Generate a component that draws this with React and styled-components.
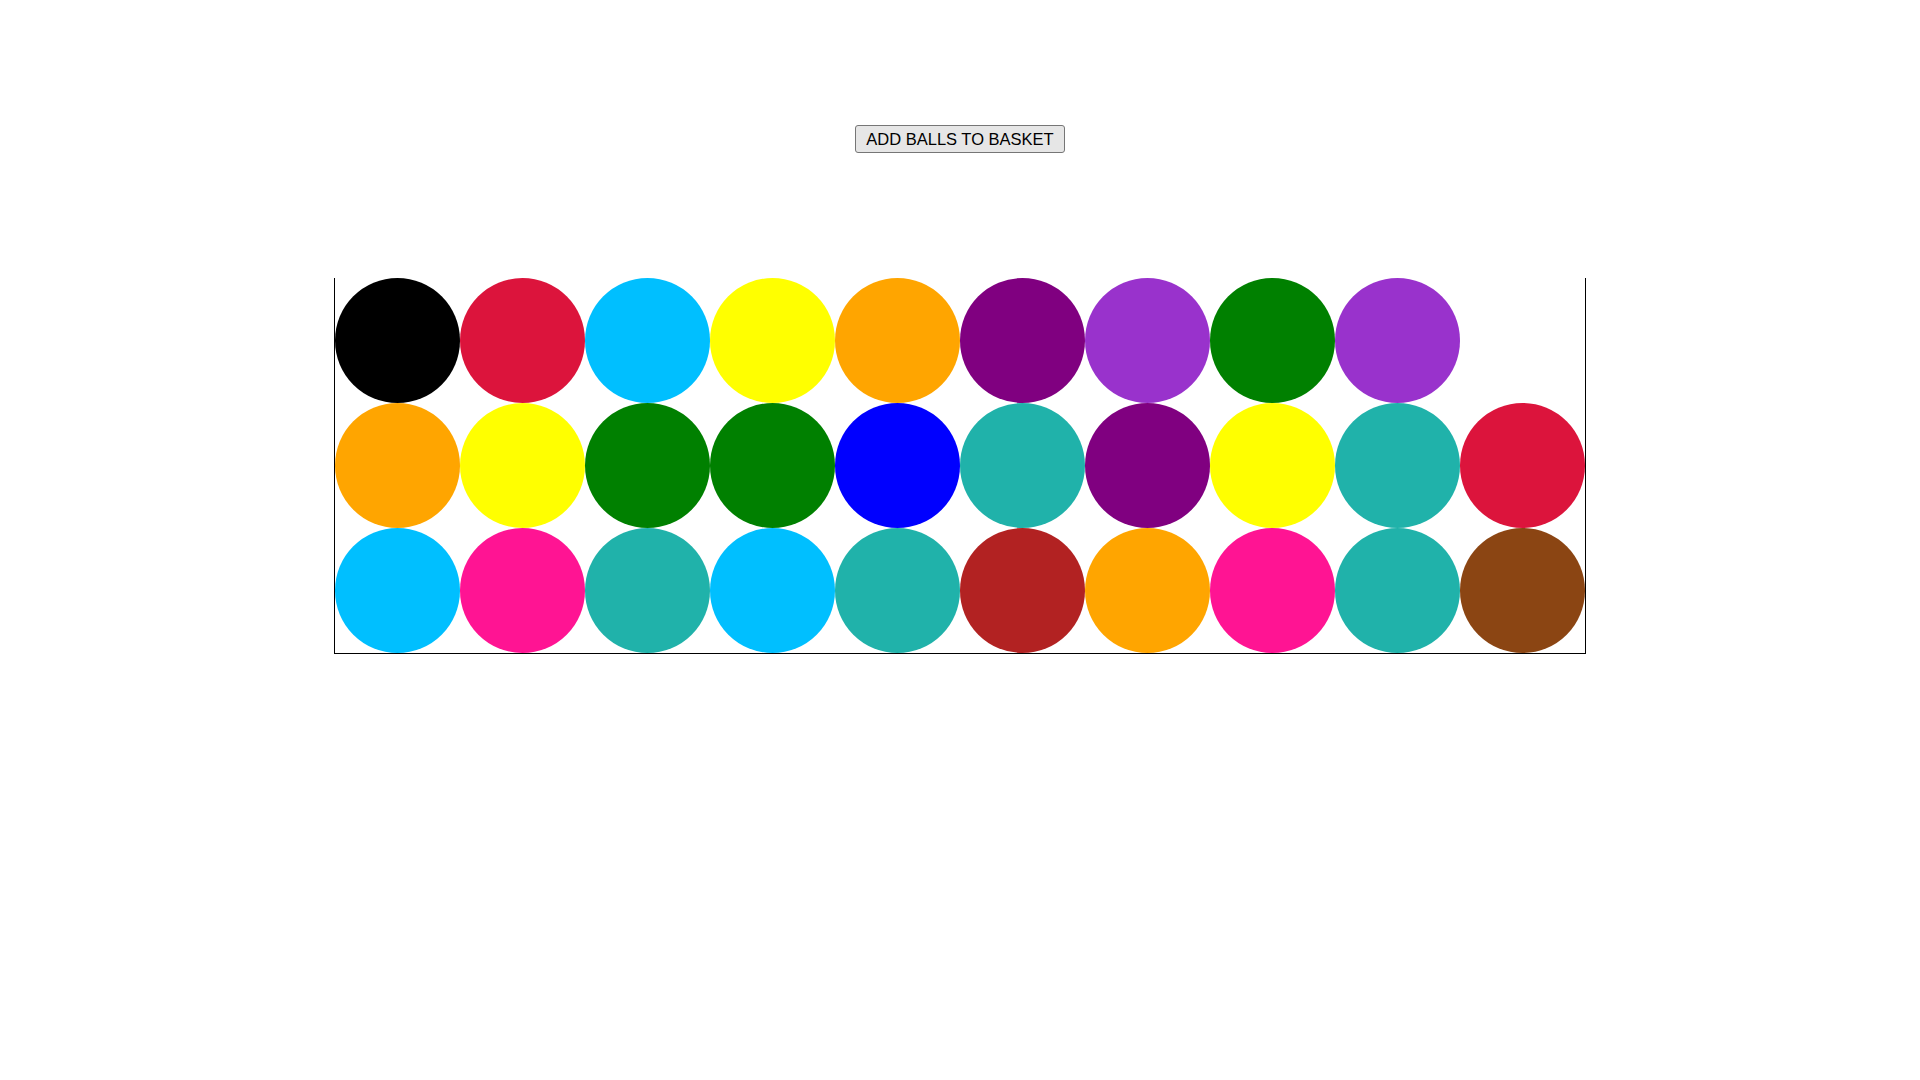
import React from 'react';
import styled, { createGlobalStyle } from 'styled-components';

const GlobalStyle = createGlobalStyle`
  body {
    margin: 0;
    background: #fff;
    font-family: "Liberation Sans", Arial, sans-serif;
  }
`;

const Page = styled.div`
  display: flex;
  flex-direction: column;
  align-items: center;
  padding-top: 125px;
`;

const AddButton = styled.button`
  height: 28px;
  padding: 0 10px;
  font-family: "Liberation Sans", Arial, sans-serif;
  font-size: 16.5px;
  color: #000;
  background: #e6e6e6;
  border: 1px solid #767676;
  border-radius: 3px;
  cursor: pointer;
`;

const Basket = styled.div`
  margin-top: 125px;
  width: 1250px;
  height: 375px;
  display: flex;
  flex-wrap: wrap-reverse;
  align-content: flex-start;
  border: 1px solid #000;
  border-top: none;
`;

const Ball = styled.div`
  width: 125px;
  height: 125px;
  border-radius: 50%;
  background: ${(p) => p.color};
`;

// filled bottom-up, left to right
const balls = [
  'deepskyblue', 'deeppink', 'lightseagreen', 'deepskyblue', 'lightseagreen',
  'firebrick', 'orange', 'deeppink', 'lightseagreen', 'saddlebrown',
  'orange', 'yellow', 'green', 'green', 'blue',
  'lightseagreen', 'purple', 'yellow', 'lightseagreen', 'crimson',
  'black', 'crimson', 'deepskyblue', 'yellow', 'orange',
  'purple', 'darkorchid', 'green', 'darkorchid',
];

const App = () => {
  return (
    <>
      <GlobalStyle />
      <Page>
        <AddButton>ADD BALLS TO BASKET</AddButton>
        <Basket>
          {balls.map((c, i) => (
            <Ball key={i} color={c} />
          ))}
        </Basket>
      </Page>
    </>
  );
};

export default App;
